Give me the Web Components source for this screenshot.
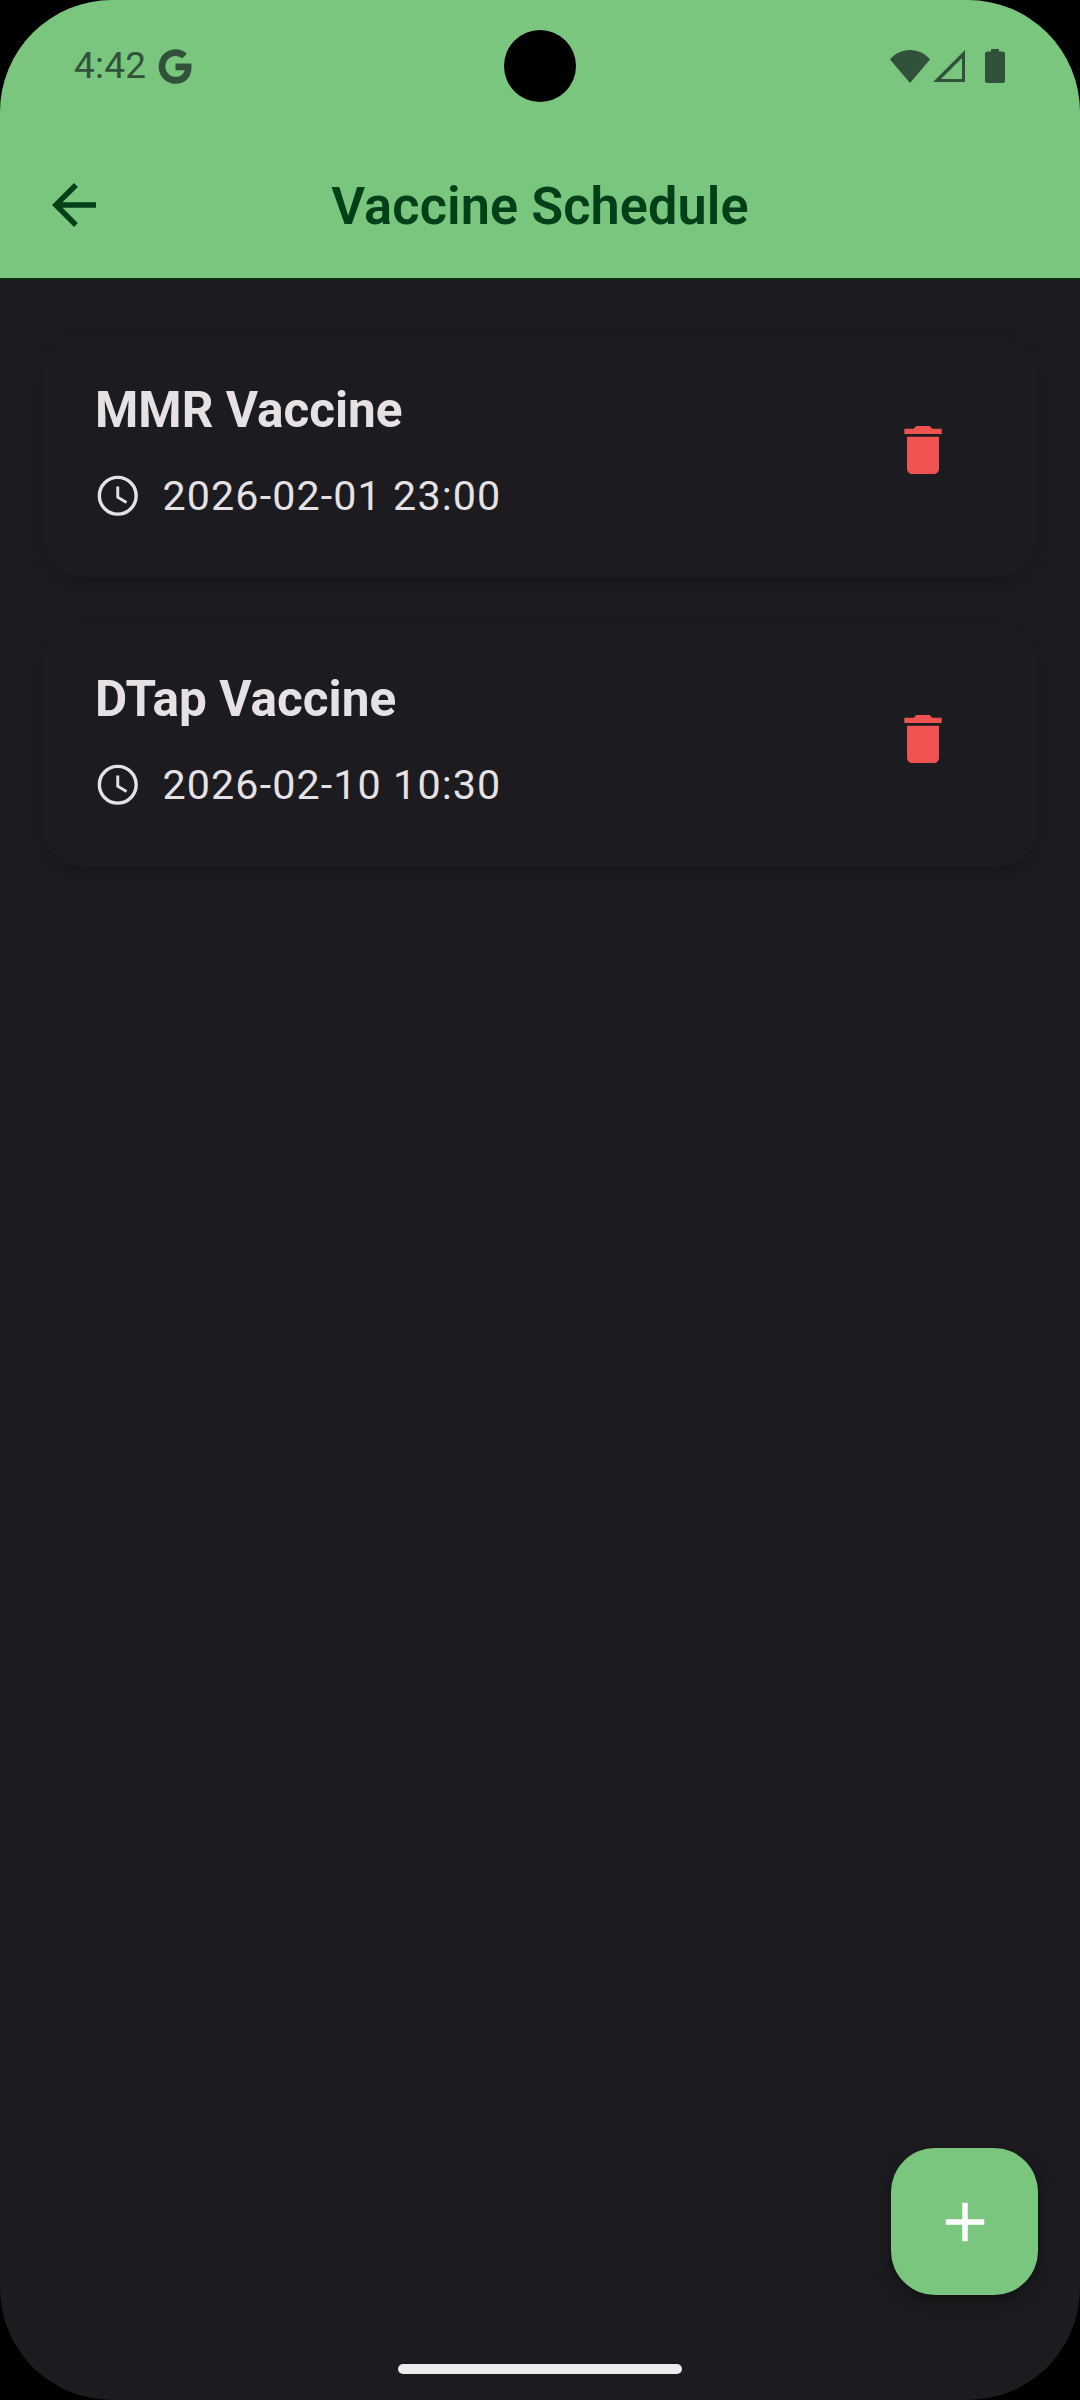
<!DOCTYPE html>
<html lang="en"><head><meta charset="utf-8"><title>Vaccine Schedule</title>
<style>
html,body{margin:0;padding:0;background:#000;}
body{width:1080px;height:2400px;overflow:hidden;font-family:Roboto,"Noto Sans",sans-serif;}
</style></head><body>
<phone-screen>
  <status-bar slot="top" time="4:42"></status-bar>
  <app-bar slot="top" heading="Vaccine Schedule"></app-bar>
  <vaccine-card name="MMR Vaccine" when="2026-02-01 23:00"></vaccine-card>
  <vaccine-card name="DTap Vaccine" when="2026-02-10 10:30"></vaccine-card>
  <add-fab slot="overlay"></add-fab>
  <home-bar slot="overlay"></home-bar>
</phone-screen>
<script>
function def(name, html, attrs, render){
  customElements.define(name, class extends HTMLElement{
    connectedCallback(){
      if(this.shadowRoot) return;
      const r=this.attachShadow({mode:'open'});
      r.innerHTML=html;
      if(render) render(r,this);
    }
  });
}
def('phone-screen',`<style>
:host{display:flex;flex-direction:column;position:relative;width:1080px;height:2400px;background:#1c1b1f;border-radius:112px;overflow:hidden;}
main{display:flex;flex-direction:column;gap:44px;padding:53px 41px 0;}
</style><slot name="top"></slot><main><slot></slot></main><slot name="overlay"></slot>`);
def('status-bar',`<style>
:host{display:flex;align-items:center;justify-content:space-between;height:132px;box-sizing:border-box;padding:0 75px 0 74px;background:#7bc67e;color:#30523a;position:relative;}
.l,.r{display:flex;align-items:center;}
.t{font-size:37px;line-height:44px;letter-spacing:.2px;}
.cam{position:absolute;left:504px;top:30px;width:72px;height:72px;border-radius:50%;background:#000;}
svg{display:block;fill:currentColor;}
</style>
<div class="l"><span class="t" id="t"></span>
<svg style="margin-left:12px" width="35" height="35" viewBox="0 0 24 24"><path d="M23 12.3c0-.8-.1-1.6-.2-2.3H12v4.6h6.2c-.3 1.4-1.100 2.600-2.300 3.400-1 .7-2.300 1.100-3.900 1.100-3.100 0-5.700-2.100-6.600-4.900-.2-.7-.4-1.500-.4-2.200s.1-1.500.4-2.200C6.300 6.900 8.900 4.800 12 4.800c1.700 0 3.300.6 4.500 1.700l3.300-3.300C17.800 1.300 15.100.2 12 .2 7.500.2 3.600 2.800 1.700 6.600.900 8.100.5 10 .5 12s.4 3.900 1.200 5.400C3.600 21.200 7.500 23.800 12 23.800c3.100 0 5.800-1 7.700-2.800 2.100-2 3.300-5 3.300-8.700z"/></svg></div>
<div class="cam"></div>
<div class="r">
<svg width="40" height="33" viewBox="0 0 40 33"><path d="M20 33 0 9.500C5 3.500 12 0 20 0s15 3.500 20 9.500z"/></svg>
<svg style="margin-left:3px" width="33" height="33" viewBox="0 0 33 33"><path fill-rule="evenodd" d="M32 0v32H0zM29 8 8 29h21z"/></svg>
<svg style="margin-left:19px" width="20" height="34" viewBox="0 0 20 34"><path d="M6 0h8v2.500h3.500A2.500 2.500 0 0 1 20 5v26.500a2.500 2.500 0 0 1-2.500 2.500h-15A2.500 2.500 0 0 1 0 31.500V5a2.500 2.500 0 0 1 2.500-2.500H6z"/></svg>
</div>`,null,(r,h)=>{r.getElementById('t').textContent=h.getAttribute('time');});
def('app-bar',`<style>
:host{display:flex;align-items:center;position:relative;height:148px;box-sizing:border-box;padding:0 0 0 41px;background:#7bc67e;border-bottom:2px solid #0c2d13;color:#004019;}
svg{display:block;fill:currentColor;flex:none;}
h1{position:absolute;left:0;right:0;top:0;margin:0;text-align:center;font-size:52.25px;font-weight:600;line-height:150px;letter-spacing:.1px;}
</style>
<svg width="66" height="66" viewBox="0 0 24 24"><path d="M20 11H7.830l5.590-5.590L12 4l-8 8 8 8 1.410-1.410L7.830 13H20z"/></svg>
<h1 id="h"></h1>`,null,(r,h)=>{r.getElementById('h').textContent=h.getAttribute('heading');});
def('vaccine-card',`<style>
:host{display:flex;align-items:center;justify-content:space-between;height:245px;box-sizing:border-box;padding:0 84px 0 54px;background:#1c1b1f;border-radius:44px;box-shadow:0 7px 12px -3px rgba(0,0,0,.22);color:#e6e1e5;}
.n{font-size:49.5px;font-weight:700;line-height:58px;letter-spacing:0;}
.w{display:flex;align-items:center;margin-top:32px;font-size:41.25px;line-height:50px;letter-spacing:1.1px;font-weight:400;}
.w svg{display:block;margin:0 20px 0 -2px;fill:none;stroke:currentColor;}
.b{margin-top:-9px;}
.d{display:block;fill:#ef5350;margin-top:-12px;}
</style>
<div class="b"><div class="n" id="n"></div>
<div class="w"><svg width="49.500" height="49.500" viewBox="0 0 49.500 49.500"><circle cx="24.750" cy="24.750" r="18.400" stroke-width="3.400"/><path d="M24.750 15.500v10.700l8.800 5.200" stroke-width="2.900"/></svg><span id="w"></span></div></div>
<svg class="d" width="64" height="64" viewBox="0 0 24 24"><path d="M6 19c0 1.100.9 2 2 2h8c1.100 0 2-.9 2-2V7H6v12zM19 4h-3.500l-1-1h-5l-1 1H5v2h14V4z"/></svg>`,null,(r,h)=>{r.getElementById('n').textContent=h.getAttribute('name');r.getElementById('w').textContent=h.getAttribute('when');});
def('add-fab',`<style>
:host{position:absolute;left:891px;top:2148px;width:147px;height:147px;display:flex;align-items:center;justify-content:center;background:#7bc67e;border-radius:44px;box-shadow:0 8px 16px rgba(0,0,0,.22),0 2px 6px rgba(0,0,0,.2);}
svg{display:block;fill:#fff;}
</style><svg width="66" height="66" viewBox="0 0 24 24"><path d="M19 13h-6v6h-2v-6H5v-2h6V5h2v6h6z"/></svg>`);
def('home-bar',`<style>
:host{position:absolute;left:398px;top:2364px;width:284px;height:10px;border-radius:5px;background:#ecebee;}
</style>`);
</script>
</body></html>
